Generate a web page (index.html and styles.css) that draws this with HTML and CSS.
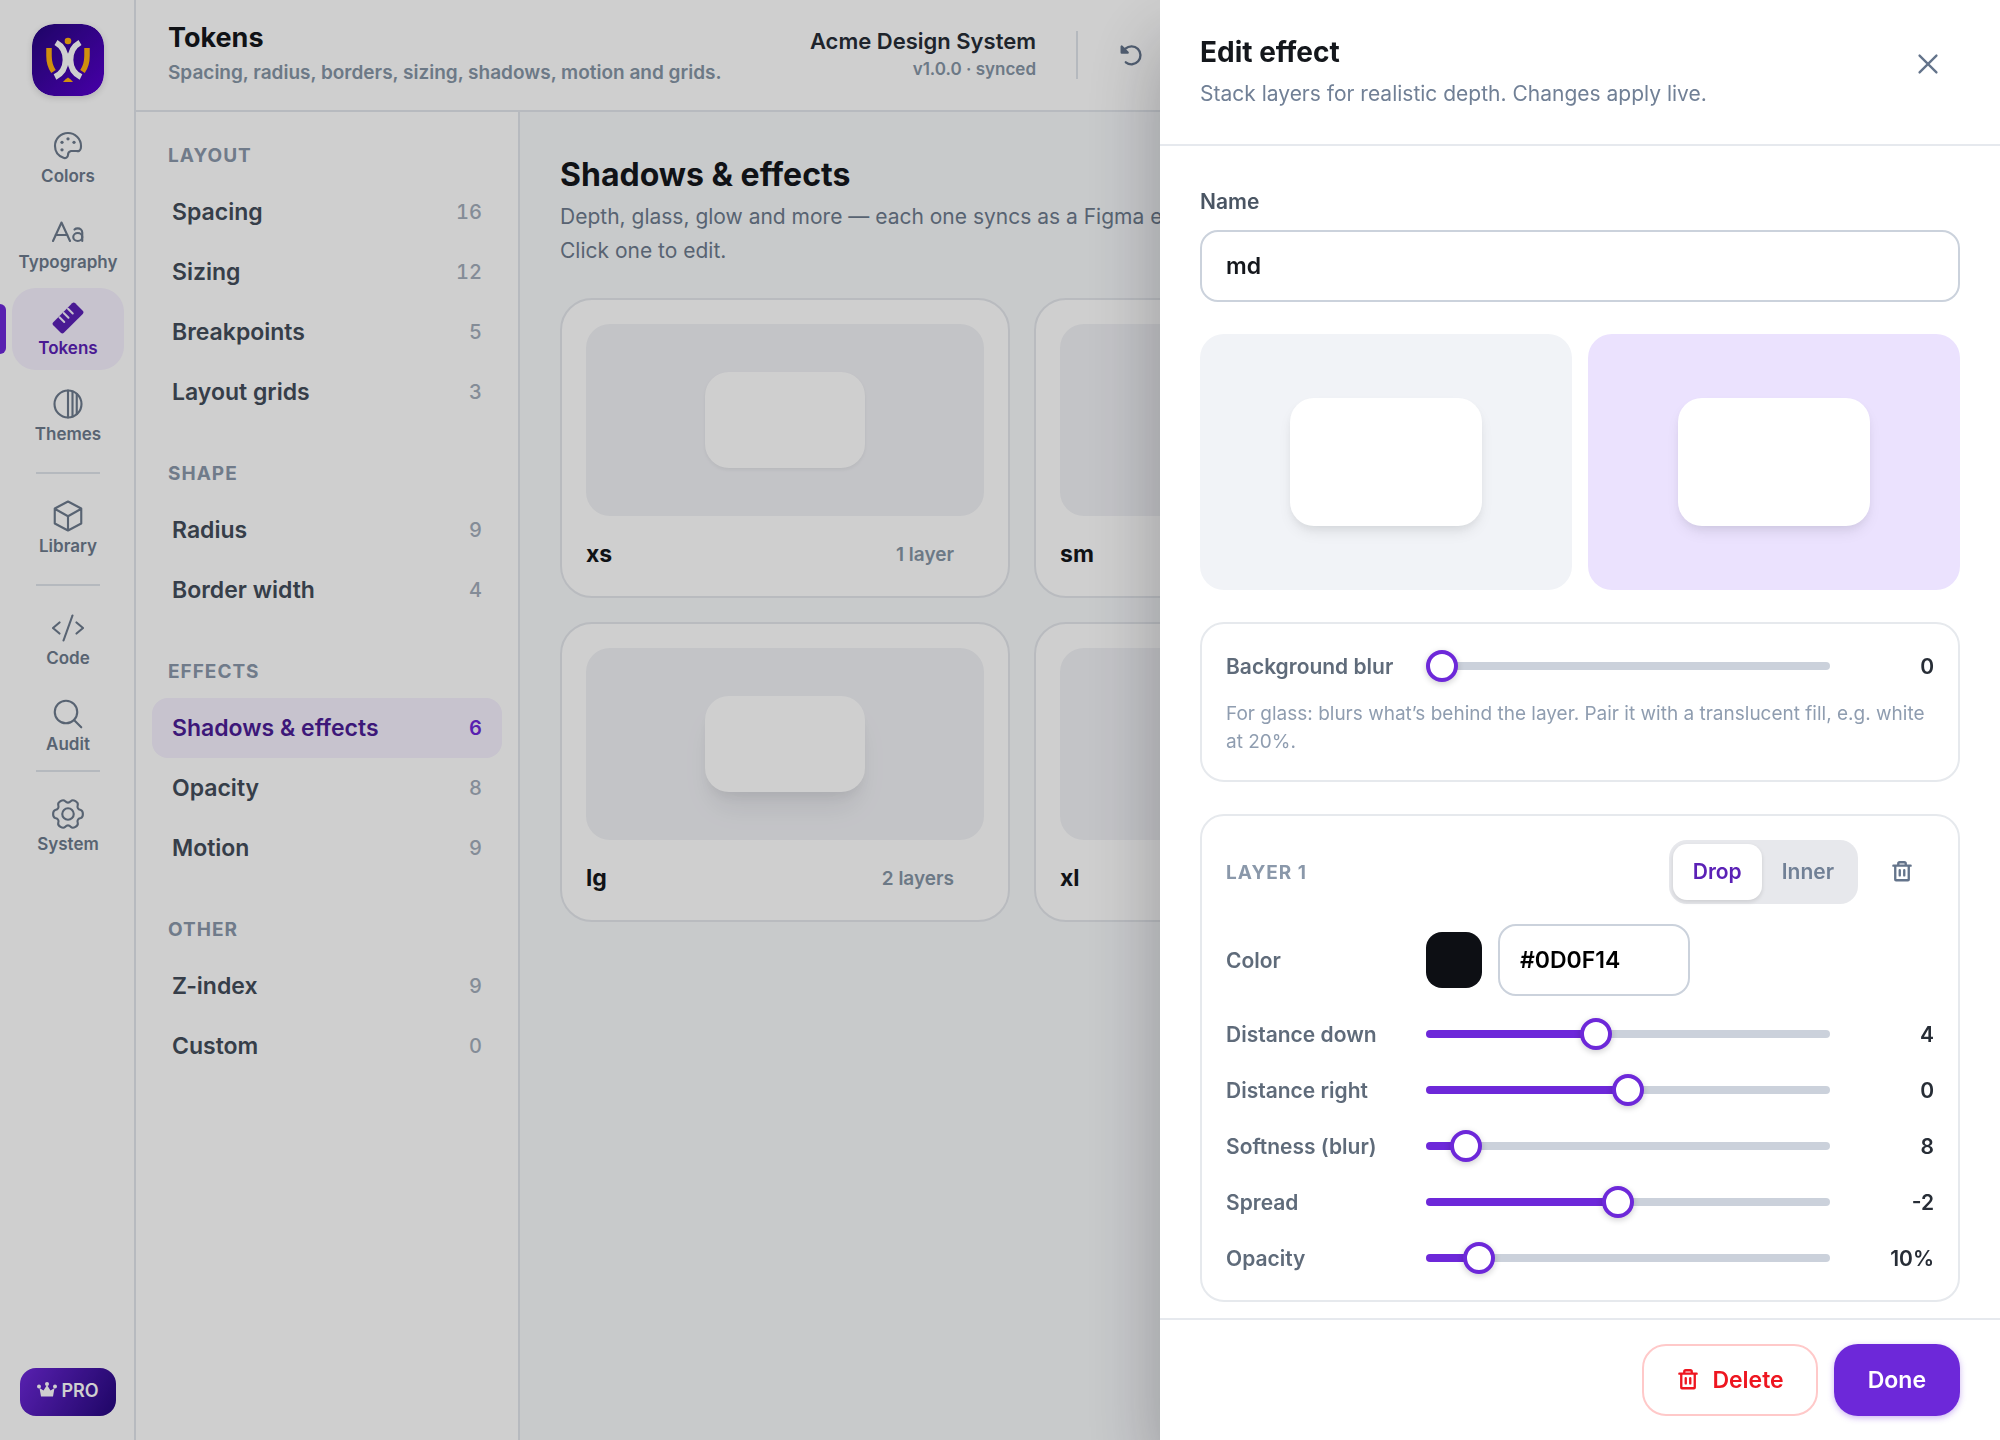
FILE: index.html
```html
<!DOCTYPE html>
<html lang="en">
<head>
    <meta charset="UTF-8">
    <meta name="viewport" content="width=device-width, initial-scale=1.0">
    <title>Tokens</title>
    <link rel="stylesheet" href="styles.css">
</head>
<body>

    <div class="app">
        <nav class="rail">
            <svg class="logo" viewBox="0 0 72 72">
                <defs>
                    <linearGradient id="logo-bg" x1="0" y1="0" x2="1" y2="1">
                        <stop offset="0" stop-color="#25077d"/>
                        <stop offset="1" stop-color="#5800d0"/>
                    </linearGradient>
                </defs>
                <rect width="72" height="72" rx="22" fill="url(#logo-bg)"/>
                <g fill="none" stroke-width="6" stroke="#fff">
                    <path d="M24 18.500C37 26 37 46 23 53"/>
                    <path d="M48 18.500C35 26 35 46 49 53"/>
                </g>
                <g fill="none" stroke-width="5.500" stroke="#ffb012">
                    <path d="M17 24v8q0 9 4.500 15.500"/>
                    <path d="M55 24v8q0 9-4.500 15.500"/>
                </g>
                <circle cx="36" cy="17" r="3.300" fill="#ffb012"/>
                <path d="M31 58q2-3 5-4.500q3 1.500 5 4.500z" fill="#ffb012"/>
            </svg>

            <a class="rail-item" href="#">
                <svg class="icon" viewBox="0 0 256 256"><path d="M128 200a32 32 0 0 1 24-32h46.200a24 24 0 0 0 31.400-18.600A104 104 0 0 0 232 127.200C231.600 70 184 23.600 127.200 24A104 104 0 0 0 24 128c0 44 28 79.500 68 94.600A26 26 0 0 0 128 200Z"/><g class="solid"><circle cx="128" cy="70" r="13"/><circle cx="80" cy="98" r="13"/><circle cx="80" cy="158" r="13"/><circle cx="176" cy="98" r="13"/></g></svg>
                <span>Colors</span>
            </a>
            <a class="rail-item" href="#">
                <svg class="icon" viewBox="0 0 256 256"><polyline points="144,200 76,52 8,200"/><line x1="30" y1="152" x2="122" y2="152"/><ellipse cx="206" cy="168" rx="36" ry="32"/><path d="M180 108c6-6 14-9 26-9 20 0 36 14 36 32v69"/></svg>
                <span>Typography</span>
            </a>
            <a class="rail-item active" href="#">
                <svg class="icon" viewBox="0 0 256 256"><path class="solid" d="M246 70 186 10a18 18 0 0 0-25 0L10 161a18 18 0 0 0 0 25l60 60a18 18 0 0 0 25 0L246 95a18 18 0 0 0 0-25Z"/><path class="notch" d="M60 122l38 38M94 88l38 38M128 54l38 38"/></svg>
                <span>Tokens</span>
            </a>
            <a class="rail-item" href="#">
                <svg class="icon" viewBox="0 0 256 256"><circle cx="128" cy="128" r="108"/><path d="M128 20v216M164 28v200M198 46v164"/></svg>
                <span>Themes</span>
            </a>
            <div class="rail-divider"></div>
            <a class="rail-item" href="#">
                <svg class="icon" viewBox="0 0 256 256"><path d="M128 12 234 68v120l-106 56-106-56V68ZM22 70l106 60 106-60M128 130v112"/></svg>
                <span>Library</span>
            </a>
            <div class="rail-divider"></div>
            <a class="rail-item" href="#">
                <svg class="icon" viewBox="0 0 256 256"><polyline points="60,84 8,128 60,172"/><polyline points="196,84 248,128 196,172"/><line x1="164" y1="28" x2="92" y2="228"/></svg>
                <span>Code</span>
            </a>
            <a class="rail-item" href="#">
                <svg class="icon" viewBox="0 0 256 256"><circle cx="112" cy="112" r="90"/><line x1="176" y1="176" x2="234" y2="234"/></svg>
                <span>Audit</span>
            </a>
            <div class="rail-divider tight"></div>
            <a class="rail-item" href="#">
                <svg class="icon" viewBox="0 0 256 256"><circle cx="128" cy="128" r="46"/><path d="M247 128Q247 155 230 160Q213 164 207 174Q201 183 206 200Q211 217 188 231Q164 245 152 232Q139 219 128 219Q117 219 104 232Q92 245 68 231Q45 217 50 200Q55 183 49 174Q43 164 26 160Q9 155 9 128Q9 101 26 96Q43 92 49 82Q55 73 50 56Q45 39 68 25Q92 11 104 24Q117 37 128 37Q139 37 152 24Q164 11 188 25Q211 39 206 56Q201 73 207 82Q213 92 230 96Q247 101 247 128Z"/></svg>
                <span>System</span>
            </a>

            <button class="pro" type="button">
                <svg viewBox="0 0 20 16"><path d="M4 14.500 2.500 6 6.500 8.500 10 3 13.500 8.500 17.500 6 16 14.500Z"/><circle cx="2" cy="4.500" r="2"/><circle cx="10" cy="2" r="2"/><circle cx="18" cy="4.500" r="2"/></svg>
                PRO
            </button>
        </nav>

        <div class="workspace">
            <header class="topbar">
                <div class="page-title">
                    <h1>Tokens</h1>
                    <p>Spacing, radius, borders, sizing, shadows, motion and grids.</p>
                </div>
                <div class="system">
                    <strong>Acme Design System</strong>
                    <span>v1.0.0 · synced</span>
                </div>
                <div class="toolbar">
                    <button class="icon-button" type="button" aria-label="Undo">
                        <svg class="icon-small" viewBox="0 0 256 256"><path fill="currentColor" d="M18 38v64h64z"/><path d="M62 206a96 96 0 1 0-4-146L30 90"/></svg>
                    </button>
                </div>
            </header>

            <div class="columns">
                <aside class="sidebar">
                    <h2>Layout</h2>
                    <a class="side-link" href="#">Spacing <span>16</span></a>
                    <a class="side-link" href="#">Sizing <span>12</span></a>
                    <a class="side-link" href="#">Breakpoints <span>5</span></a>
                    <a class="side-link" href="#">Layout grids <span>3</span></a>
                    <h2>Shape</h2>
                    <a class="side-link" href="#">Radius <span>9</span></a>
                    <a class="side-link" href="#">Border width <span>4</span></a>
                    <h2>Effects</h2>
                    <a class="side-link active" href="#">Shadows &amp; effects <span>6</span></a>
                    <a class="side-link" href="#">Opacity <span>8</span></a>
                    <a class="side-link" href="#">Motion <span>9</span></a>
                    <h2>Other</h2>
                    <a class="side-link" href="#">Z-index <span>9</span></a>
                    <a class="side-link" href="#">Custom <span>0</span></a>
                </aside>

                <main class="content">
                    <h2>Shadows &amp; effects</h2>
                    <p class="intro">Depth, glass, glow and more — each one syncs as a Figma effect. <br>Click one to edit.</p>
                    <div class="cards">
                        <button class="card" type="button">
                            <span class="stage"><span class="sample shadow-xs"></span></span>
                            <span class="card-foot"><b>xs</b><small>1 layer</small></span>
                        </button>
                        <button class="card" type="button">
                            <span class="stage"><span class="sample shadow-sm"></span></span>
                            <span class="card-foot"><b>sm</b></span>
                        </button>
                        <button class="card" type="button" aria-label="md">
                            <span class="stage"><span class="sample shadow-md"></span></span>
                        </button>
                        <button class="card" type="button">
                            <span class="stage"><span class="sample shadow-lg"></span></span>
                            <span class="card-foot"><b>lg</b><small>2 layers</small></span>
                        </button>
                        <button class="card" type="button">
                            <span class="stage"><span class="sample shadow-lg"></span></span>
                            <span class="card-foot"><b>xl</b></span>
                        </button>
                    </div>
                </main>
            </div>
        </div>
    </div>

    <div class="scrim"></div>

    <section class="drawer" role="dialog" aria-labelledby="drawer-title">
        <header class="drawer-head">
            <div>
                <h2 id="drawer-title">Edit effect</h2>
                <p>Stack layers for realistic depth. Changes apply live.</p>
            </div>
            <button class="icon-button" type="button" aria-label="Close">
                <svg class="icon-small" viewBox="0 0 256 256"><path d="M38 38 218 218M218 38 38 218"/></svg>
            </button>
        </header>

        <div class="drawer-body">
            <div class="field">
                <label for="name">Name</label>
                <input class="text-input" type="text" id="name" value="md">
            </div>

            <div class="previews">
                <div class="preview"><div class="preview-box shadow-md"></div></div>
                <div class="preview tinted"><div class="preview-box shadow-md"></div></div>
            </div>

            <div class="panel blur-panel">
                <div class="row">
                    <label for="bg-blur">Background blur</label>
                    <input type="range" id="bg-blur" min="0" max="40" value="0" style="--fill: 0%">
                    <output for="bg-blur">0</output>
                </div>
                <p class="hint">For glass: blurs what’s behind the layer. Pair it with a translucent fill, e.g. white at 20%.</p>
            </div>

            <div class="panel">
                <div class="layer-head">
                    <h3>Layer 1</h3>
                    <div class="segmented">
                        <button class="selected" type="button" aria-pressed="true">Drop</button>
                        <button type="button" aria-pressed="false">Inner</button>
                    </div>
                    <button class="icon-button" type="button" aria-label="Remove layer">
                        <svg class="icon-small" viewBox="0 0 256 256"><path d="M36 60h184M104 108v56M152 108v56M200 60v148a8 8 0 0 1-8 8H64a8 8 0 0 1-8-8V60M88 60V40a16 16 0 0 1 16-16h48a16 16 0 0 1 16 16v20"/></svg>
                    </button>
                </div>
                <div class="row color-row">
                    <label for="hex">Color</label>
                    <div class="color-fields">
                        <input type="color" value="#0d0f14" aria-label="Color swatch">
                        <input class="text-input hex" type="text" id="hex" value="#0D0F14">
                    </div>
                </div>
                <div class="row">
                    <label for="down">Distance down</label>
                    <input type="range" id="down" min="-20" max="38" value="4" style="--fill: 41%">
                    <output for="down">4</output>
                </div>
                <div class="row">
                    <label for="right">Distance right</label>
                    <input type="range" id="right" min="-40" max="40" value="0" style="--fill: 50%">
                    <output for="right">0</output>
                </div>
                <div class="row">
                    <label for="soft">Softness (blur)</label>
                    <input type="range" id="soft" min="0" max="124" value="8" style="--fill: 7%">
                    <output for="soft">8</output>
                </div>
                <div class="row">
                    <label for="spread">Spread</label>
                    <input type="range" id="spread" min="-36" max="36" value="-2" style="--fill: 47%">
                    <output for="spread">-2</output>
                </div>
                <div class="row">
                    <label for="opacity">Opacity</label>
                    <input type="range" id="opacity" min="0" max="100" value="10" style="--fill: 10%">
                    <output for="opacity">10%</output>
                </div>
            </div>
        </div>

        <footer class="drawer-foot">
            <button class="delete" type="button">
                <svg class="icon-small" viewBox="0 0 256 256"><path d="M36 60h184M104 108v56M152 108v56M200 60v148a8 8 0 0 1-8 8H64a8 8 0 0 1-8-8V60M88 60V40a16 16 0 0 1 16-16h48a16 16 0 0 1 16 16v20"/></svg>
                Delete
            </button>
            <button class="done" type="button">Done</button>
        </footer>
    </section>

</body>
</html>
```

FILE: styles.css
```css
* {
    box-sizing: border-box;
}

body {
    margin: 0;
    height: 100vh;
    overflow: hidden;
    font-family: Inter, "Liberation Sans", sans-serif;
    color: #14171c;
    background-color: #fff;
}

h1, h2, h3, p {
    margin: 0;
}

button, input {
    font-family: inherit;
}

a {
    text-decoration: none;
}

.app {
    display: flex;
    height: 100vh;
}

/* Icons */
.icon,
.icon-small {
    fill: none;
    stroke: currentColor;
    stroke-linecap: round;
    stroke-linejoin: round;
    flex-shrink: 0;
}

.icon {
    width: 32px;
    height: 32px;
    stroke-width: 17;
}

.icon-small {
    width: 24px;
    height: 24px;
    stroke-width: 25;
}

.icon .solid {
    fill: currentColor;
    stroke: none;
}

.icon .notch {
    stroke: #f5f0fe;
    stroke-width: 16;
}

.icon-button {
    display: flex;
    align-items: center;
    justify-content: center;
    width: 64px;
    height: 64px;
    padding: 0;
    border: 0;
    background: none;
    color: #64748b;
}

/* Left rail */
.rail {
    display: flex;
    flex-direction: column;
    align-items: center;
    gap: 4px;
    width: 136px;
    padding: 24px 10px 24px 12px;
    border-right: 2px solid #e2e6ec;
    flex-shrink: 0;
}

.logo {
    width: 72px;
    height: 72px;
    margin-bottom: 16px;
    border-radius: 22px;
    box-shadow: 0 2px 6px rgba(13, 15, 20, 0.15);
}

.rail-item {
    position: relative;
    display: flex;
    flex-direction: column;
    align-items: center;
    gap: 2px;
    width: 100%;
    height: 82px;
    padding-top: 14px;
    border-radius: 24px;
    color: #6d7b8d;
    font-size: 17px;
    line-height: 24px;
    font-weight: 600;
}

.rail-item.active {
    background-color: #f5f0fe;
    color: #5b21b6;
}

.rail-item.active::before {
    content: "";
    position: absolute;
    left: -12px;
    top: 16px;
    width: 6px;
    height: 50px;
    border-radius: 0 6px 6px 0;
    background-color: #6d28d9;
}

.rail-divider {
    width: 64px;
    height: 2px;
    margin: 12px 0 8px;
    background-color: #dfe4ea;
}

.rail-divider.tight {
    margin-top: 0;
}

.pro {
    display: flex;
    align-items: center;
    justify-content: center;
    gap: 4px;
    width: 96px;
    height: 48px;
    margin-top: auto;
    padding: 0 0 4px;
    border: 0;
    border-radius: 16px;
    background: linear-gradient(120deg, #6d28d9, #25077d);
    color: #fff;
    font-size: 18px;
    font-weight: 600;
}

.pro svg {
    width: 20px;
    height: 16px;
    fill: currentColor;
}

/* Top bar */
.workspace {
    display: flex;
    flex-direction: column;
    flex: 1;
    min-width: 0;
}

.topbar {
    display: flex;
    align-items: center;
    height: 112px;
    padding-left: 32px;
    border-bottom: 2px solid #e2e6ec;
    flex-shrink: 0;
}

.page-title {
    flex: 1;
}

.page-title h1 {
    font-size: 27px;
    line-height: 36px;
    font-weight: 700;
}

.page-title p {
    color: #8695a6;
    font-size: 19px;
    line-height: 34px;
    font-weight: 600;
    white-space: nowrap;
}

.system {
    display: flex;
    flex-direction: column;
    text-align: right;
}

.system strong {
    color: #272d36;
    font-size: 22px;
    line-height: 28px;
    font-weight: 600;
}

.system span {
    color: #8695a6;
    font-size: 17px;
    line-height: 28px;
    font-weight: 600;
}

.toolbar {
    display: flex;
    align-items: center;
    width: 924px;
    height: 48px;
    margin-left: 40px;
    padding-left: 22px;
    border-left: 2px solid #dfe4ea;
}

/* Token groups */
.columns {
    display: flex;
    flex: 1;
    min-height: 0;
}

.sidebar {
    width: 384px;
    padding: 32px 16px;
    border-right: 2px solid #e2e6ec;
    flex-shrink: 0;
}

.sidebar h2 {
    margin: 40px 0 14px 16px;
    color: #8a98aa;
    font-size: 19px;
    line-height: 24px;
    font-weight: 700;
    letter-spacing: 1px;
    text-transform: uppercase;
}

.sidebar h2:first-child {
    margin-top: 0;
}

.side-link {
    display: flex;
    align-items: center;
    justify-content: space-between;
    height: 60px;
    padding: 0 20px;
    border-radius: 16px;
    color: #434d5a;
    font-size: 23px;
    font-weight: 600;
}

.side-link span {
    color: #a3adba;
    font-size: 20px;
    font-weight: 500;
    font-variant-numeric: tabular-nums;
}

.side-link.active {
    background-color: #f5f0fe;
    color: #4c1d95;
}

.side-link.active span {
    color: #6d28d9;
    font-weight: 600;
}

/* Effects grid */
.content {
    flex: 1;
    min-width: 0;
    padding: 40px 42px 40px 40px;
    background-color: #f7f9fb;
}

.content h2 {
    font-size: 32px;
    line-height: 46px;
    font-weight: 700;
}

.intro {
    margin: 2px 0 30px;
    color: #6d7b8d;
    font-size: 21px;
    line-height: 34px;
}

.cards {
    display: grid;
    grid-template-columns: repeat(3, 1fr);
    gap: 24px;
}

.card {
    display: flex;
    flex-direction: column;
    height: 300px;
    padding: 24px;
    border: 2px solid #e4e7ec;
    border-radius: 32px;
    background-color: #fff;
    color: #14171c;
    text-align: left;
}

.stage {
    display: flex;
    align-items: center;
    justify-content: center;
    height: 192px;
    border-radius: 24px;
    background-color: #f1f2f6;
}

.sample {
    width: 160px;
    height: 96px;
    border-radius: 24px;
    background-color: #fff;
}

.shadow-xs {
    box-shadow: 0 2px 4px rgba(13, 15, 20, 0.06);
}

.shadow-sm {
    box-shadow: 0 4px 8px rgba(13, 15, 20, 0.08);
}

.shadow-md {
    box-shadow: 0 8px 16px -4px rgba(13, 15, 20, 0.1), 0 4px 8px -2px rgba(13, 15, 20, 0.05);
}

.shadow-lg {
    box-shadow: 0 20px 30px -6px rgba(13, 15, 20, 0.08), 0 8px 12px -4px rgba(13, 15, 20, 0.06);
}

.card-foot {
    display: flex;
    align-items: center;
    justify-content: space-between;
    padding: 22px 30px 0 0;
}

.card-foot b {
    font-size: 23px;
    line-height: 32px;
    font-weight: 700;
}

.card-foot small {
    color: #8695a6;
    font-size: 19px;
    font-weight: 600;
}

.scrim {
    position: fixed;
    inset: 0;
    background-color: rgba(0, 0, 0, 0.19);
}

/* Drawer */
.drawer {
    position: fixed;
    top: 0;
    right: 0;
    bottom: 0;
    display: flex;
    flex-direction: column;
    width: 840px;
    background-color: #fff;
    box-shadow: 0 40px 72px rgba(13, 15, 20, 0.28);
}

.drawer-head {
    display: flex;
    justify-content: space-between;
    padding: 32px 40px;
    border-bottom: 2px solid #e6e9ee;
}

.drawer-head h2 {
    margin-bottom: 4px;
    font-size: 28px;
    line-height: 40px;
    font-weight: 700;
}

.drawer-head p {
    color: #718096;
    font-size: 21px;
    line-height: 36px;
}

.drawer-body {
    display: flex;
    flex-direction: column;
    gap: 32px;
    flex: 1;
    min-height: 0;
    padding: 40px 40px 0;
    overflow: hidden;
}

.field {
    display: flex;
    flex-direction: column;
    gap: 12px;
}

.field label {
    color: #4a5563;
    font-size: 21px;
    line-height: 32px;
    font-weight: 600;
}

.text-input {
    width: 100%;
    height: 72px;
    padding: 0 24px;
    border: 2px solid #cbd2dc;
    border-radius: 18px;
    background-color: #fff;
    color: #14171c;
    font-size: 23px;
    font-weight: 600;
}

.previews {
    display: flex;
    gap: 16px;
}

.preview {
    display: flex;
    align-items: center;
    justify-content: center;
    flex: 1;
    height: 256px;
    border-radius: 24px;
    background-color: #f1f3f7;
}

.preview.tinted {
    background-color: #ebe2fe;
}

.preview-box {
    width: 192px;
    height: 128px;
    border-radius: 24px;
    background-color: #fff;
}

.panel {
    display: flex;
    flex-direction: column;
    gap: 20px;
    padding: 24px;
    border: 2px solid #e6e9ed;
    border-radius: 24px;
}

.blur-panel {
    gap: 16px;
}

.row {
    display: grid;
    grid-template-columns: 180px 1fr 84px;
    align-items: center;
    gap: 20px;
    height: 36px;
}

.row label {
    color: #5f6b7a;
    font-size: 21px;
    font-weight: 600;
    white-space: nowrap;
}

.row output {
    color: #272d36;
    font-size: 21px;
    font-weight: 600;
    text-align: right;
}

.hint {
    color: #8f9db0;
    font-size: 19px;
    line-height: 28px;
}

input[type="range"] {
    width: 100%;
    height: 32px;
    margin: 0;
    background: none;
    appearance: none;
}

input[type="range"]::-webkit-slider-runnable-track {
    height: 8px;
    border-radius: 4px;
    background: linear-gradient(to right, #6d28d9 var(--fill), #cbd1db var(--fill));
}

input[type="range"]::-webkit-slider-thumb {
    width: 32px;
    height: 32px;
    margin-top: -12px;
    border: 4px solid #6d28d9;
    border-radius: 50%;
    background-color: #fff;
    box-shadow: 0 2px 6px rgba(13, 15, 20, 0.2);
    appearance: none;
}

.layer-head {
    display: flex;
    align-items: center;
    gap: 12px;
}

.layer-head h3 {
    flex: 1;
    color: #8a98aa;
    font-size: 19px;
    font-weight: 700;
    letter-spacing: 1px;
    text-transform: uppercase;
}

.segmented {
    display: flex;
    padding: 4px;
    border-radius: 18px;
    background-color: #e7e8ec;
}

.segmented button {
    height: 56px;
    padding: 0 20px 2px;
    border: 0;
    border-radius: 14px;
    background: none;
    color: #718096;
    font-size: 21px;
    font-weight: 600;
}

.segmented .selected {
    background-color: #fff;
    color: #5b21b6;
    box-shadow: 0 2px 4px rgba(13, 15, 20, 0.12);
}

.color-row {
    height: 72px;
}

.color-fields {
    display: flex;
    align-items: center;
    gap: 16px;
}

input[type="color"] {
    width: 56px;
    height: 56px;
    padding: 0;
    border: 0;
    border-radius: 16px;
    background: none;
    overflow: hidden;
    appearance: none;
}

input[type="color"]::-webkit-color-swatch-wrapper {
    padding: 0;
}

input[type="color"]::-webkit-color-swatch {
    border: 0;
}

.text-input.hex {
    width: 192px;
    padding: 0 20px;
    color: #000;
}

.drawer-foot {
    display: flex;
    justify-content: flex-end;
    gap: 16px;
    padding: 24px 40px;
    border-top: 2px solid #e6e9ee;
}

.drawer-foot button {
    display: flex;
    align-items: center;
    gap: 12px;
    height: 72px;
    padding: 0 32px;
    border: 2px solid transparent;
    border-radius: 24px;
    font-size: 23px;
    font-weight: 600;
}

.drawer-foot .delete {
    border-color: #ffc9c9;
    background-color: #fff;
    color: #ee1620;
}

.drawer-foot .done {
    background-color: #6d28d9;
    color: #fff;
    box-shadow: 0 2px 6px rgba(109, 40, 217, 0.35);
}
```
